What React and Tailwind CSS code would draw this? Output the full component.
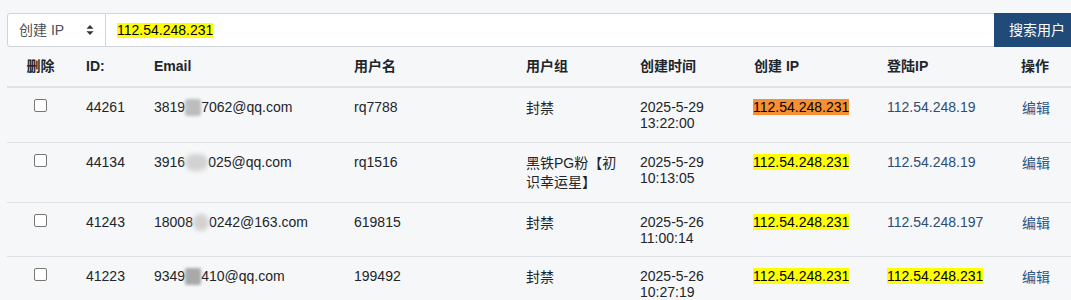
import React from "react";

const COLS = "grid grid-cols-[67px_68px_200px_172px_114px_114px_133px_134px_1fr]";

function Hid({ w, tone }) {
  const cls =
    tone === "dark"
      ? "bg-[#a9a9a9] rounded-[2px] blur-[1.5px]"
      : tone === "mid"
      ? "bg-[#bdbdbd] rounded-[3px] blur-[1.5px]"
      : "bg-[#d2d2d2] rounded-full blur-[2px]";
  return <span className={`inline-block h-[17px] align-[-4px] ${cls}`} style={{ width: w }} />;
}

function IP({ v, hl }) {
  if (hl === "orange") return <span className="bg-[#f79033] text-black">{v}</span>;
  if (hl === "yellow") return <span className="bg-[#ffff00] text-black">{v}</span>;
  return <span className="text-[#2d4d73]">{v}</span>;
}

const rows = [
  {
    h: "h-[55px]",
    id: "44261",
    email: ["3819", 16, "mid", "7062@qq.com"],
    name: "rq7788",
    group: ["封禁"],
    date: "2025-5-29",
    time: "13:22:00",
    cip: "orange",
    lip: "112.54.248.19",
    lhl: null,
  },
  {
    h: "h-[60px]",
    id: "44134",
    email: ["3916", 23, "light", "025@qq.com"],
    name: "rq1516",
    group: ["黑铁PG粉【初", "识幸运星】"],
    date: "2025-5-29",
    time: "10:13:05",
    cip: "yellow",
    lip: "112.54.248.19",
    lhl: null,
  },
  {
    h: "h-[54px]",
    id: "41243",
    email: ["18008", 16, "light", "0242@163.com"],
    name: "619815",
    group: ["封禁"],
    date: "2025-5-26",
    time: "11:00:14",
    cip: "yellow",
    lip: "112.54.248.197",
    lhl: null,
  },
  {
    h: "h-[54px]",
    id: "41223",
    email: ["9349", 16, "dark", "410@qq.com"],
    name: "199492",
    group: ["封禁"],
    date: "2025-5-26",
    time: "10:27:19",
    cip: "yellow",
    lip: "112.54.248.231",
    lhl: "yellow",
  },
];

export default function App() {
  return (
    <div
      className="w-[1071px] h-[300px] overflow-hidden bg-[#f6f7f9] text-[14px] text-[#212529]"
      style={{ fontFamily: '"Liberation Sans", Arial, "Noto Sans CJK SC", sans-serif' }}
    >
      {/* search bar */}
      <div className="flex ml-[7px] mt-[13px] h-[34px] w-[1090px]">
        <div className="flex items-center w-[99px] h-full bg-white border border-[#ced4da] rounded-l-[3px] pl-[11px] pr-[10px] text-[#495057]">
          <span className="flex-1 leading-none">创建 IP</span>
          <svg width="8" height="10" viewBox="0 0 8 10" className="mr-[1px]">
            <path d="M4 0 L7.5 3.8 L0.5 3.8 Z" fill="#333" />
            <path d="M4 10 L7.5 6.2 L0.5 6.2 Z" fill="#333" />
          </svg>
        </div>
        <div className="flex items-center w-[888px] h-full bg-white border-y border-[#ced4da] pl-[11px]">
          <span className="bg-[#ffff00] text-black leading-[15px]">112.54.248.231</span>
        </div>
        <div className="flex items-center h-full w-[100px] bg-[#204a78] text-white pl-[15px]">搜索用户</div>
      </div>

      {/* table */}
      <div className="ml-[7px]">
        <div className={`${COLS} h-[41px] border-b-2 border-[#dee2e6] font-bold items-center`}>
          <div className="text-center">删除</div>
          <div className="pl-[12px]">ID:</div>
          <div className="pl-[12px]">Email</div>
          <div className="pl-[12px]">用户名</div>
          <div className="pl-[12px]">用户组</div>
          <div className="pl-[12px]">创建时间</div>
          <div className="pl-[12px]">创建 IP</div>
          <div className="pl-[12px]">登陆IP</div>
          <div className="pl-[12px]">操作</div>
        </div>
        {rows.map((r) => (
          <div key={r.id} className={`${COLS} ${r.h} border-b border-[#dee2e6] leading-[16px]`}>
            <div className="pt-[11px]">
              <div className="mx-auto w-[13px] h-[13px] border border-[#767676] rounded-[2px] bg-white translate-x-[0px]" />
            </div>
            <div className="pl-[12px] pt-[11px]">{r.id}</div>
            <div className="pl-[12px] pt-[11px] whitespace-nowrap">
              {r.email[0]}
              <Hid w={r.email[1]} tone={r.email[2]} />
              {r.email[3]}
            </div>
            <div className="pl-[12px] pt-[11px]">{r.name}</div>
            <div className="pl-[12px] pt-[11px] leading-[19px] whitespace-nowrap">
              {r.group.map((g, i) => (
                <div key={i}>{g}</div>
              ))}
            </div>
            <div className="pl-[12px] pt-[11px]">
              <div>{r.date}</div>
              <div>{r.time}</div>
            </div>
            <div className="pl-[11px] pt-[11px]">
              <IP v="112.54.248.231" hl={r.cip} />
            </div>
            <div className="pl-[12px] pt-[11px]">
              <IP v={r.lip} hl={r.lhl} />
            </div>
            <div className="pl-[13px] pt-[12px] text-[#2e5585]">编辑</div>
          </div>
        ))}
      </div>
    </div>
  );
}
